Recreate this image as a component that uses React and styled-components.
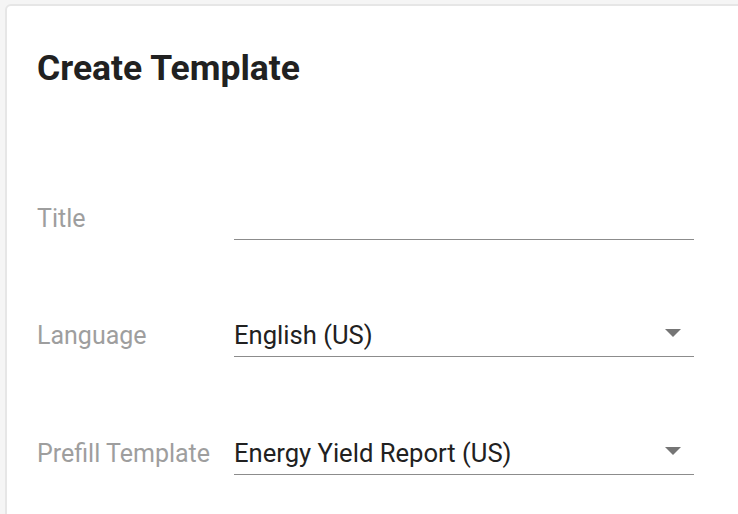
import styled, { createGlobalStyle } from 'styled-components'

/* GLOBAL */
const GlobalStyle = createGlobalStyle`
  html, body {
    margin: 0;
    padding: 0;
    background: #f5f5f5;
    overflow: hidden;
    font-family: Roboto, 'Liberation Sans', sans-serif;
  }
`

/* PAGE */
const Page = styled.div`
  width: 738px;
  height: 514px;
  box-sizing: border-box;
  padding: 4px 0 0 5px;
  overflow: hidden;
`

/* CARD */
const Card = styled.div`
  width: 780px;
  height: 560px;
  box-sizing: border-box;
  padding: 38px 30px 0 30px;
  background: #fff;
  border: 2px solid #e6e6e6;
  border-radius: 6px;
`

/* HEADING */
const Heading = styled.h1`
  margin: 0;
  font-size: 35.5px;
  font-weight: 700;
  line-height: 48px;
  color: #212121;
`

/* FORM */
const Form = styled.div`
  display: flex;
  flex-direction: column;
  margin-top: 30px;
`

/* ROW */
const Row = styled.div`
  display: grid;
  grid-template-columns: 197px 460px;
  align-items: end;
  height: 117.5px;
`

const Label = styled.div`
  font-size: 25px;
  color: #9e9e9e;
  line-height: 36px;
  padding-bottom: 3px;
`

const Field = styled.div`
  display: flex;
  align-items: center;
  justify-content: space-between;
  height: 36px;
  padding-bottom: 3px;
  border-bottom: 1px solid #8c8c8c;
  font-size: 25.6px;
  color: #212121;
`

const Arrow = styled.span`
  width: 0;
  height: 0;
  margin: 0 13px 4px 0;
  border-left: 8px solid transparent;
  border-right: 8px solid transparent;
  border-top: 8px solid #757575;
`

function App() {
  const rows = [
    { label: 'Title', value: '', select: false },
    { label: 'Language', value: 'English (US)', select: true },
    { label: 'Prefill Template', value: 'Energy Yield Report (US)', select: true },
  ]

  return (
    <Page>
      <GlobalStyle />
      <Card>
        <Heading>Create Template</Heading>
        <Form>
          {rows.map((row) => (
            <Row key={row.label}>
              <Label>{row.label}</Label>
              <Field>
                <span>{row.value}</span>
                {row.select && <Arrow />}
              </Field>
            </Row>
          ))}
        </Form>
      </Card>
    </Page>
  )
}

export default App
